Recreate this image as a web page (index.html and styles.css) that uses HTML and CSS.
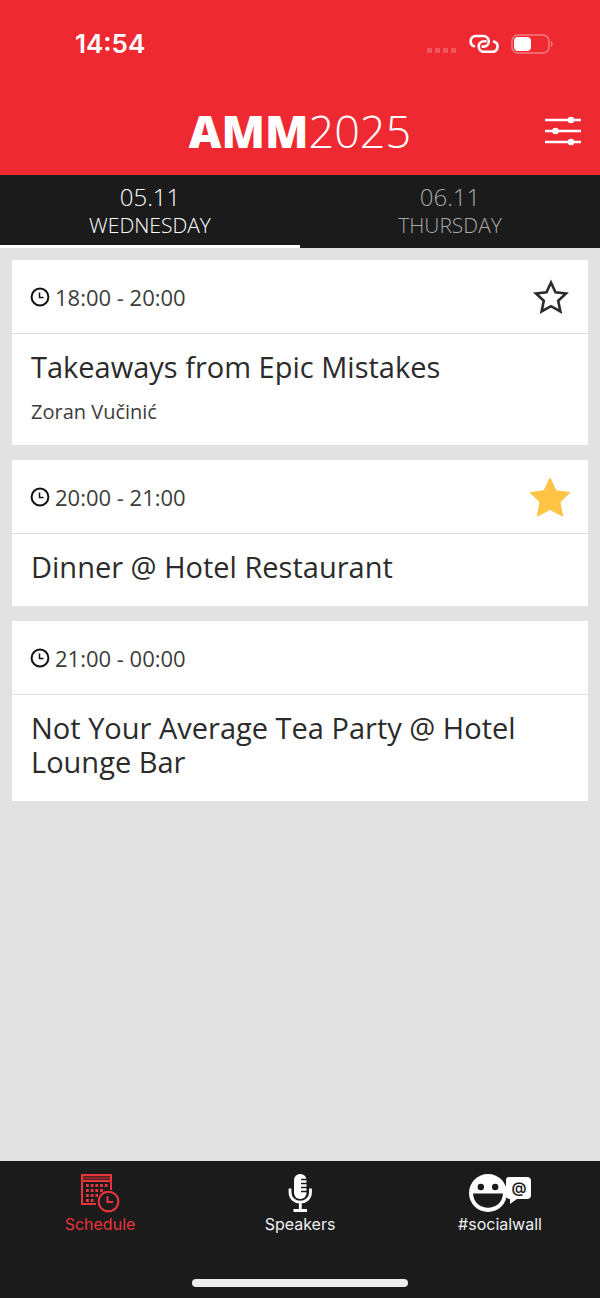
FILE: index.html
```html
<!DOCTYPE html>
<html lang="en">
<head>
    <meta charset="UTF-8">
    <meta name="viewport" content="width=device-width, initial-scale=1.0">
    <title>AMM2025</title>
    <link rel="stylesheet" href="styles.css">
</head>
<body>
    <header class="header">
        <div class="status-bar">
            <span class="clock">14:54</span>
            <div class="status-icons">
                <svg width="30" height="20" viewBox="0 0 30 20" fill="#f2565d">
                    <path d="M0 14h5v5H0zM8 14h5v5H8zM16 14h5v5h-5zM24 14h5v5h-5z"/>
                </svg>
                <svg width="30" height="20" viewBox="0 0 30 20" fill="none" stroke="#fff" stroke-width="2.6" stroke-linecap="round">
                    <path d="M5 12.200A5.300 5.300 0 0 1 6.500 2H14.500A5.300 5.300 0 0 1 14.500 12.600H13.500"/>
                    <path d="M25 7.500A5.300 5.300 0 0 1 23.500 17.800H15A5.300 5.300 0 0 1 15 7.200H16.500"/>
                </svg>
                <svg width="42" height="20" viewBox="0 0 42 20">
                    <rect x="1" y="1" width="37" height="18" rx="6" fill="none" stroke="#f67d82" stroke-width="1.500"/>
                    <rect x="3" y="3" width="17" height="14" rx="4" fill="#fff"/>
                    <path d="M40 7v6c2-1 2-5 0-6z" fill="#f67d82"/>
                </svg>
            </div>
        </div>
        <div class="title-bar">
            <h1><strong>AMM</strong>2025</h1>
            <button class="filter" type="button" aria-label="Filter">
                <svg width="36" height="30" viewBox="0 0 36 30" fill="#fff">
                    <path d="M0 2.800h36v2.500H0zM0 13.800h36v2.500H0zM0 24.800h36v2.500H0z"/>
                    <circle cx="26" cy="4" r="3.300"/>
                    <circle cx="10.500" cy="15" r="3.300"/>
                    <circle cx="26" cy="26" r="3.300"/>
                </svg>
            </button>
        </div>
    </header>

    <div class="tabs">
        <button class="tab active" type="button"><span class="date">05.11</span><span>WEDNESDAY</span></button>
        <button class="tab" type="button"><span class="date">06.11</span><span>THURSDAY</span></button>
    </div>

    <main class="content">
        <article class="card">
            <div class="card-top">
                <svg class="icon-clock" width="20" height="20" viewBox="0 0 20 20" fill="none" stroke="#111" stroke-width="2">
                    <circle cx="10" cy="10" r="8.400"/>
                    <path d="M9.500 5.500V10.500H13.500" stroke-width="1.500"/>
                </svg>
                <time>18:00 - 20:00</time>
                <button class="star" type="button" aria-label="Add to favourites">
                    <svg width="42" height="42" viewBox="0 0 42 42">
                        <path d="M22 6.500L26.500 16.300 37 17.500 29.200 24.700 31.400 35.500 22 30.200 12.600 35.500 14.800 24.700 7 17.500 17.500 16.300Z" fill="none" stroke="#2b2b2b" stroke-width="2.600"/>
                    </svg>
                </button>
            </div>
            <div class="card-body">
                <h2>Takeaways from Epic Mistakes</h2>
                <p>Zoran Vučinić</p>
            </div>
        </article>

        <article class="card">
            <div class="card-top">
                <svg class="icon-clock" width="20" height="20" viewBox="0 0 20 20" fill="none" stroke="#111" stroke-width="2">
                    <circle cx="10" cy="10" r="8.400"/>
                    <path d="M9.500 5.500V10.500H13.500" stroke-width="1.500"/>
                </svg>
                <time>20:00 - 21:00</time>
                <button class="star" type="button" aria-label="Remove from favourites">
                    <svg width="42" height="42" viewBox="0 0 42 42">
                        <path d="M21 2L27 14.800 41 16.500 31 26 33.600 40 21 33.500 8.400 40 11 26 1 16.500 15 14.800Z" fill="#ffc445" stroke="#ffc445" stroke-linejoin="round"/>
                    </svg>
                </button>
            </div>
            <div class="card-body">
                <h2>Dinner @ Hotel Restaurant</h2>
            </div>
        </article>

        <article class="card">
            <div class="card-top">
                <svg class="icon-clock" width="20" height="20" viewBox="0 0 20 20" fill="none" stroke="#111" stroke-width="2">
                    <circle cx="10" cy="10" r="8.400"/>
                    <path d="M9.500 5.500V10.500H13.500" stroke-width="1.500"/>
                </svg>
                <time>21:00 - 00:00</time>
            </div>
            <div class="card-body">
                <h2>Not Your Average Tea Party @ Hotel Lounge Bar</h2>
            </div>
        </article>
    </main>

    <footer class="footer">
        <nav class="nav">
            <a class="nav-item active" href="#schedule">
                <svg width="40" height="40" viewBox="0 0 40 40" fill="none" stroke="#e8343c" stroke-width="2">
                    <path d="M16 31H2V2H31V17M2 8H31"/>
                    <path d="M3 5H30" stroke="#8b2529" stroke-width="3"/>
                    <path d="M6 12.500H28M6 17.500H25M6 22.500H18M6 27.500H15" stroke-width="2.800" stroke-dasharray="2.800 1.900"/>
                    <circle cx="28.500" cy="28.500" r="9.800"/>
                    <path d="M27.500 23V29H33"/>
                </svg>
                <span>Schedule</span>
            </a>
            <a class="nav-item" href="#speakers">
                <svg width="40" height="40" viewBox="0 0 40 40">
                    <rect x="14" y="1" width="12.500" height="25" rx="6" fill="#fff"/>
                    <path d="M21 6.500H27M21 10.500H27M21 14.500H27M21 18.500H27" stroke="#1b1b1b" stroke-width="1.400"/>
                    <path d="M10 15.500V19C10 32.500 30.500 32.500 30.500 19V15.500M20.300 29V37M13.500 37.500H27" fill="none" stroke="#fff" stroke-width="2.800"/>
                </svg>
                <span>Speakers</span>
            </a>
            <a class="nav-item" href="#socialwall">
                <svg width="64" height="40" viewBox="0 0 64 40">
                    <circle cx="20" cy="20" r="19" fill="#fff"/>
                    <circle cx="12.800" cy="14" r="3.200" fill="#1b1b1b"/>
                    <circle cx="27.200" cy="14" r="3.200" fill="#1b1b1b"/>
                    <path d="M5 20.500H35C34 39.500 6 39.500 5 20.500Z" fill="#1b1b1b"/>
                    <path d="M41 4H59Q63 4 63 8V22Q63 26 59 26H49L42 31V26Q38 26 38 22V7Q38 4 41 4Z" fill="#fff"/>
                    <text x="51" y="20" class="at">@</text>
                </svg>
                <span>#socialwall</span>
            </a>
        </nav>
        <div class="home-indicator"></div>
    </footer>
</body>
</html>
```

FILE: styles.css
```css
* {
    box-sizing: border-box;
}

body {
    margin: 0;
    min-height: 100vh;
    display: flex;
    flex-direction: column;
    background-color: #e2e2e2;
    color: #2b2b2b;
    font-family: "Open Sans", sans-serif;
}

button {
    padding: 0;
    border: 0;
    background: none;
    color: inherit;
    font-family: inherit;
}

svg {
    display: block;
}

/* Header */
.header {
    background-color: #ee2932;
    color: #fff;
}

.status-bar {
    display: flex;
    justify-content: space-between;
    align-items: center;
    height: 87px;
    padding: 0 47px 0 75px;
}

.clock {
    font-family: Inter, sans-serif;
    font-size: 26px;
    font-weight: 600;
}

.status-icons {
    display: flex;
    gap: 12px;
}

.title-bar {
    display: grid;
    grid-template-columns: 1fr auto 1fr;
    align-items: center;
    height: 88px;
    padding: 0 19px;
}

h1 {
    grid-column: 2;
    margin: 0;
    font-size: 45px;
    font-weight: 300;
    line-height: 60px;
}

h1 strong {
    font-weight: 800;
}

.filter {
    justify-self: end;
}

/* Day tabs */
.tabs {
    display: flex;
    height: 73px;
    background-color: #1b1b1b;
    color: #fff;
}

.tab {
    flex: 1;
    display: flex;
    flex-direction: column;
    align-items: center;
    padding-top: 8px;
    border-bottom: 3px solid transparent;
    color: #a9a9a9;
    font-size: 21px;
    font-weight: 300;
    line-height: 28px;
}

.tab.active {
    border-bottom-color: #fff;
    color: #fff;
}

.date {
    font-size: 24px;
}

/* Sessions */
.content {
    flex: 1;
    display: flex;
    flex-direction: column;
    gap: 15px;
    padding: 12px;
}

.card {
    background-color: #fff;
}

.card-top {
    display: flex;
    align-items: center;
    gap: 5px;
    height: 74px;
    padding: 0 17px 0 18px;
    border-bottom: 1px solid #dedede;
    color: #3c3c3c;
    font-size: 22px;
}

.star {
    margin-left: auto;
}

.card-body {
    padding: 16px 19px 22px;
}

h2 {
    margin: 0;
    font-size: 29px;
    font-weight: 400;
    line-height: 34px;
}

p {
    margin: 17px 0 0;
    color: #3c3c3c;
    font-size: 20px;
    line-height: 22px;
}

/* Bottom navigation */
.footer {
    height: 137px;
    padding-top: 12px;
    background-color: #1b1b1b;
}

.nav {
    display: flex;
}

.nav-item {
    flex: 1;
    display: flex;
    flex-direction: column;
    align-items: center;
    color: #f0f0f0;
    font-family: Inter, sans-serif;
    font-size: 16px;
    line-height: 22px;
    text-decoration: none;
}

.nav-item.active {
    color: #e8343c;
}

.at {
    fill: #1b1b1b;
    font-size: 15px;
    font-weight: 600;
    text-anchor: middle;
}

.home-indicator {
    width: 36%;
    height: 8px;
    margin: 44px auto 0;
    border-radius: 4px;
    background-color: #ececec;
}
```
